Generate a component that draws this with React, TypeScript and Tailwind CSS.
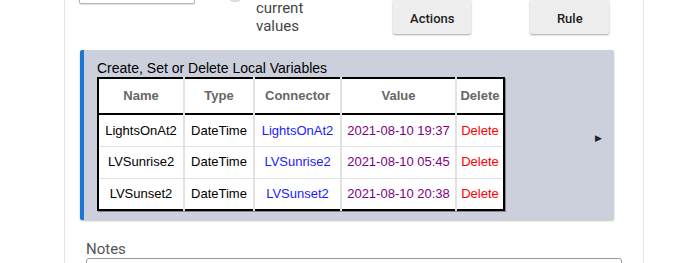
import React from 'react';

const rows = [
  { name: 'LightsOnAt2', type: 'DateTime', connector: 'LightsOnAt2', value: '2021-08-10 19:37' },
  { name: 'LVSunrise2', type: 'DateTime', connector: 'LVSunrise2', value: '2021-08-10 05:45' },
  { name: 'LVSunset2', type: 'DateTime', connector: 'LVSunset2', value: '2021-08-10 20:38' },
];

export default function App() {
  return (
    <div className="w-[690px] h-[263px] overflow-hidden bg-white font-['Roboto',sans-serif]">
      <div className="ml-[64px] w-[580px] h-full border-x border-[#e3e3e3]">
        {/* Top controls (scrolled, partly cut off) */}
        <div className="flex items-start h-[50px]">
          <div className="ml-[14px] -mt-[26px] w-[116px] h-[30px] border border-[#b5b5b5] rounded-[2px] bg-white shadow-[0_1px_1px_rgba(0,0,0,0.12)]" />
          <div className="ml-[30px] -mt-[18px] w-[20px] h-[20px] rounded-full bg-[#e4e4e4] border border-[#d0d0d0]" />
          <div className="ml-[11px] -mt-[1px] text-[15px] leading-[18px] text-[#444]">
            <div>current</div>
            <div>values</div>
          </div>
          <button className="ml-[90px] w-[78px] h-[34px] flex items-end justify-center pb-[7px] bg-[#eeeeee] rounded-b-[2px] shadow-[0_1px_2px_rgba(0,0,0,0.35)] text-[13px] leading-[16px] font-medium text-[#222]">
            Actions
          </button>
          <button className="ml-[59px] w-[79px] h-[34px] flex items-end justify-center pb-[7px] bg-[#eeeeee] rounded-b-[2px] shadow-[0_1px_2px_rgba(0,0,0,0.35)] text-[13px] leading-[16px] font-medium text-[#222]">
            Rule
          </button>
        </div>

        {/* Local variables panel */}
        <div className="ml-[15px] w-[534px] h-[170px] flex bg-[#ccd0dc] border-l-4 border-[#1976d2] rounded-[2px] shadow-[0_1px_2px_rgba(0,0,0,0.25)] font-['Liberation_Sans',Arial,sans-serif]">
          <div className="pl-[13px] pt-[10px]">
            <div className="text-[14px] leading-[17px] text-black">Create, Set or Delete Local Variables</div>
            <table className="border-collapse border-2 border-black bg-white text-[13px] text-center shadow-[1px_1px_0_#888]">
              <thead>
                <tr className="h-[36px] border-b-2 border-black">
                  <th className="w-[86px] border-r-2 border-[#e2e2e2] font-bold text-[#666]">Name</th>
                  <th className="w-[70px] border-r-2 border-[#e2e2e2] font-bold text-[#666]">Type</th>
                  <th className="w-[87px] border-r-2 border-[#e2e2e2] font-bold text-[#666]">Connector</th>
                  <th className="w-[115px] border-r-2 border-[#e2e2e2] font-bold text-[#666]">Value</th>
                  <th className="w-[48px] font-bold text-[#666]">Delete</th>
                </tr>
              </thead>
              <tbody>
                {rows.map((r, i) => (
                  <tr key={r.name} className={`h-[32px] ${i < rows.length - 1 ? 'border-b border-[#e2e2e2]' : ''}`}>
                    <td className="border-r-2 border-[#e2e2e2] text-black">{r.name}</td>
                    <td className="border-r-2 border-[#e2e2e2] text-black">{r.type}</td>
                    <td className="border-r-2 border-[#e2e2e2] text-[#1a1aff]">{r.connector}</td>
                    <td className="border-r-2 border-[#e2e2e2] text-[#800080]">{r.value}</td>
                    <td className="text-[#ff0000]">Delete</td>
                  </tr>
                ))}
              </tbody>
            </table>
          </div>
          <div className="flex-1 flex items-center justify-end pr-[12px] pt-[6px]">
            <span className="text-[9px] leading-none text-[#222]">▶</span>
          </div>
        </div>

        {/* Notes */}
        <div className="ml-[21px] mt-[20px] text-[15px] leading-[18px] text-[#555]">Notes</div>
        <div className="ml-[21px] w-[536px] h-[40px] border border-[#999] rounded-t-[3px]" />
      </div>
    </div>
  );
}
